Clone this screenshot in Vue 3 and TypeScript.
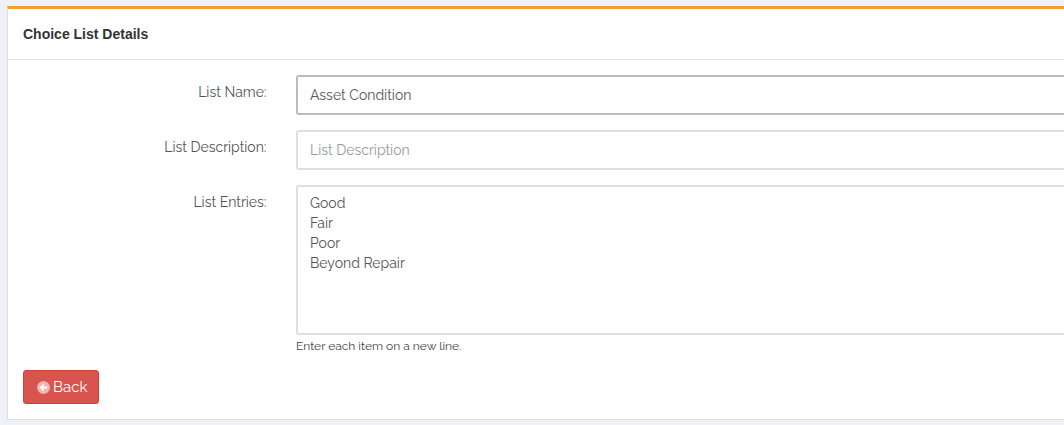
<script setup lang="ts">
const entries = "Good\nFair\nPoor\nBeyond Repair";
</script>

<template>
  <div class="page">
    <section class="panel">
      <header class="head">Choice List Details</header>
      <div class="body">
        <div class="row r1">
          <label class="lbl">List Name:</label>
          <input class="ctl name" value="Asset Condition" />
        </div>
        <div class="row r2">
          <label class="lbl">List Description:</label>
          <input class="ctl" placeholder="List Description" />
        </div>
        <div class="row r3">
          <label class="lbl">List Entries:</label>
          <div class="col">
            <textarea class="ctl area" :value="entries"></textarea>
            <p class="help">Enter each item on a new line.</p>
          </div>
        </div>
        <button class="back">
          <svg class="ic" viewBox="0 0 14 14" width="13" height="13">
            <circle cx="7" cy="7" r="7" fill="#f0b4b2" />
            <path d="M2.8 7 L6.6 3.2 L7.8 4.4 L6.1 6 L11 6 L11 8 L6.1 8 L7.8 9.6 L6.6 10.8 Z" fill="#fff" />
          </svg>
          <span>Back</span>
        </button>
      </div>
    </section>
  </div>
</template>

<style>
html, body { margin: 0; padding: 0; background: #eff1f7; overflow: hidden; }
</style>

<style scoped>
.page { width: 1064px; height: 425px; padding: 6px 0 0 7px; box-sizing: border-box; font-family: Raleway, Lato, "Open Sans", sans-serif; overflow: hidden; }
.panel { width: 1100px; height: 414px; background: #fff; border: 1px solid #ddd; border-top: 3px solid #f0a030; box-sizing: border-box; }
.head { height: 51px; padding-left: 15px; font: bold 14px/50px "Liberation Sans", sans-serif; color: #333; border-bottom: 1px solid #e3e3e3; box-sizing: border-box; }
.body { padding-top: 15px; }
.row { display: flex; }
.lbl { width: 258.5px; text-align: right; font-size: 14px; line-height: 20px; color: #555; padding-top: 7px; box-sizing: border-box; }
.ctl { display: block; margin: 0 0 0 29.5px; width: 800px; height: 40px; box-sizing: border-box; border: 2px solid #dedede; border-radius: 3px; padding: 0 12px; font: 14px/20px Raleway, Lato, sans-serif; color: #555; background: #fff; outline: none; }
.name { border-color: #bbb; }
.ctl::placeholder { color: #999; opacity: 1; }
.r2 { margin-top: 15px; }
.r3 { margin-top: 15px; }
.area { height: 150px; padding: 6px 12px; resize: none; }
.help { margin: 3px 0 0 29.5px; font: 12px/17px Raleway, Lato, sans-serif; color: #444; }
.back { display: flex; align-items: center; gap: 3px; margin: 15px 0 0 15px; width: 76px; height: 34px; padding: 0 0 0 13px; background: #d9534f; color: #fff; border: 1px solid #d43f3a; border-radius: 3px; font: 15px Raleway, Lato, sans-serif; box-sizing: border-box; }
</style>
